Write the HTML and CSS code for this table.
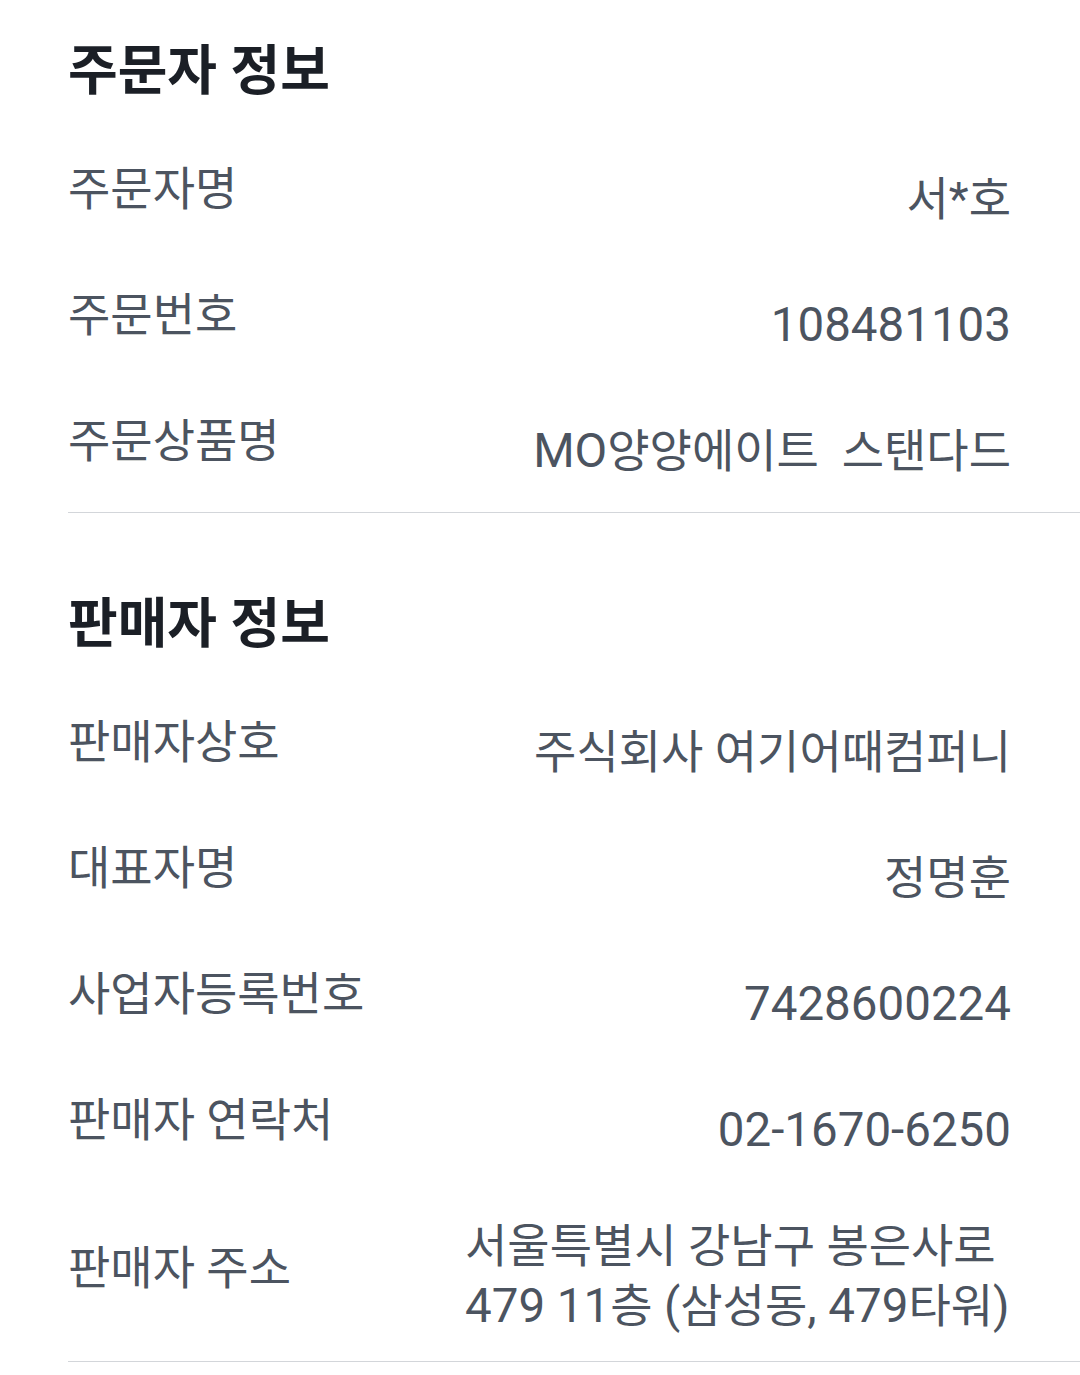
FILE: index.html
```html
<!DOCTYPE html>
<html lang="ko">
<head>
<meta charset="utf-8">
<link rel="stylesheet" href="styles.css">
</head>
<body>
<section class="section first">
  <h2 class="title">주문자 정보</h2>
  <div class="rows">
    <div class="row"><div class="label">주문자명</div><div class="value">서*호</div></div>
    <div class="row"><div class="label">주문번호</div><div class="value"><span class="num">108481103</span></div></div>
    <div class="row"><div class="label">주문상품명</div><div class="value"><span class="num">MO</span>양양에이트&nbsp; 스탠다드</div></div>
  </div>
</section>
<section class="section second">
  <h2 class="title">판매자 정보</h2>
  <div class="rows">
    <div class="row"><div class="label">판매자상호</div><div class="value">주식회사 여기어때컴퍼니</div></div>
    <div class="row"><div class="label">대표자명</div><div class="value">정명훈</div></div>
    <div class="row"><div class="label">사업자등록번호</div><div class="value"><span class="num">7428600224</span></div></div>
    <div class="row"><div class="label">판매자 연락처</div><div class="value"><span class="num">02-1670-6250</span></div></div>
    <div class="row address"><div class="label">판매자 주소</div><div class="value multi">서울특별시 강남구 봉은사로 <span class="num">479 11</span>층 <span class="num">(</span>삼성동<span class="num">, 479</span>타워<span class="num">)</span></div></div>
  </div>
</section>
</body>
</html>
```
FILE: styles.css
```css
html, body {
  margin: 0;
  padding: 0;
  background: #ffffff;
}
body {
  width: 1080px;
  font-family: Roboto, "Noto Sans CJK KR", sans-serif;
  color: #4c5460;
}
.section {
  margin-left: 68px;
  border-bottom: 1px solid #d3d6da;
}
.section.first {
  padding-bottom: 31px;
}
.section.second {
  margin-top: 40px;
  padding-bottom: 25px;
}
.title {
  margin: 0 0 51px 0;
  padding-top: 36px;
  font-size: 54px;
  font-weight: 700;
  color: #1b1f26;
  line-height: 72px;
}
.rows {
  display: flex;
  flex-direction: column;
  gap: 56px;
}
.row {
  display: flex;
  justify-content: space-between;
  align-items: flex-start;
  padding-right: 69px;
  font-size: 46px;
  line-height: 60px;
}
.label {
  flex: none;
}
.value {
  margin-top: 10px;
  text-align: right;
  white-space: nowrap;
}
.num {
  font-size: 47.5px;
}
.value.multi {
  max-width: 546px;
  white-space: normal;
  text-align: left;
  margin-top: 0;
}
.row.address .label {
  margin-top: 22px;
}
```
